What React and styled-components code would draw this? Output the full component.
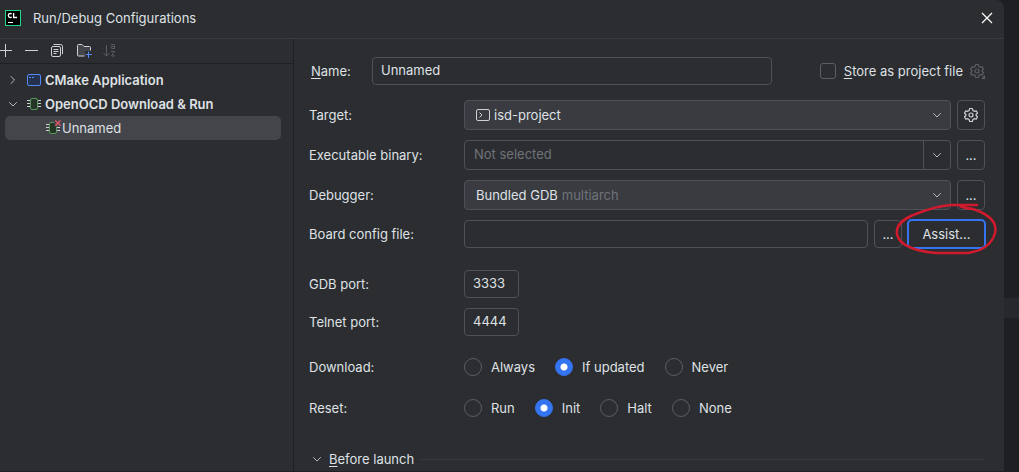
import React, { useState } from "react";
import styled, { createGlobalStyle, css } from "styled-components";

const GlobalStyle = createGlobalStyle`
  *, *::before, *::after { box-sizing: border-box; }
  html, body, #root { height: 100%; }
  body {
    margin: 0;
    background: #1e1f22;
    color: #dfe1e5;
    font: 13px/16px Inter, "Liberation Sans", sans-serif;
    overflow: hidden;
  }
  button, input, select { font: inherit; color: inherit; margin: 0; }
  svg { display: block; flex: none; }
`;

const Desktop = styled.div`
  min-height: 100%;
  display: grid;
  grid-template-columns: minmax(0, 1fr) 15px;
  border-bottom: 1px solid #231e22;
`;

const EditorEdge = styled.div`
  padding-top: 298px;
  &::before { content: ""; display: block; height: 20px; background: #26282e; }
`;

const Dialog = styled.main`
  display: flex;
  flex-direction: column;
  background: #2b2d30;
  border-top-right-radius: 8px;
`;

const TitleBar = styled.header`
  display: flex;
  align-items: center;
  gap: 12px;
  height: 39px;
  padding: 0 8px 2px 5px;
  border-bottom: 1px solid #393b40;
`;

const Title = styled.h1`
  flex: 1;
  margin: 0;
  font-size: 13px;
  font-weight: 400;
`;

const IconButton = styled.button`
  display: grid;
  place-items: center;
  padding: 0;
  border: 0;
  background: none;
`;

const Body = styled.div`
  flex: 1;
  display: grid;
  grid-template-columns: 294px minmax(0, 1fr);
`;

const Sidebar = styled.aside`
  border-right: 1px solid #1e1f22;
`;

const Toolbar = styled.div`
  display: flex;
  align-items: center;
  gap: 10px;
  height: 25px;
  border-bottom: 1px solid #1e1f22;
  padding-bottom: 2px;
  overflow: hidden;
`;

const Tree = styled.ul`
  list-style: none;
  margin: 0;
  padding: 4px 12px 0 5px;
`;

const TreeItem = styled.li`
  display: flex;
  align-items: center;
  height: 24px;
  gap: ${(p) => (p.$child ? 1 : 3)}px;
  padding-left: ${(p) => (p.$child ? 40 : 0)}px;
  border-radius: 5px;
  font-weight: ${(p) => (p.$child ? 400 : 600)};
  background: ${(p) => (p.$selected ? "#43454a" : "transparent")};
`;

const Twisty = styled(IconButton)`
  width: 16px;
  margin-right: 2px;
`;

const Form = styled.form`
  padding: 18px 19px 0 15px;
`;

const NameRow = styled.div`
  display: flex;
  align-items: center;
  padding-left: 2px;
  margin-bottom: 15px;
`;

const NameLabel = styled.label`
  width: 61px;
`;

const Mnemonic = styled.span`
  text-decoration: underline;
  text-underline-offset: 2px;
`;

const StoreOption = styled.div`
  display: flex;
  align-items: center;
  gap: 8px;
  margin-left: auto;
  padding-left: 16px;
  white-space: nowrap;
`;

const StoreLabel = styled.label`
  margin-right: -2px;
`;

const CheckBox = styled.input`
  appearance: none;
  width: 16px;
  height: 16px;
  border: 1px solid #5a5d63;
  border-radius: 3px;
`;

const box = css`
  border: 1px solid #4e5157;
  border-radius: 4px;
  background: #2b2d30;
`;

const TextBox = styled.input`
  ${box}
  height: 28px;
  padding: 0 8px 2px;
  min-width: 0;
  outline: 0;
  width: ${(p) => (p.$size ? p.$size + "px" : "auto")};
  flex: ${(p) => (p.$grow ? "1 1 0" : "none")};
`;

const NameBox = styled(TextBox)`
  flex: 0 1 400px;
`;

const Row = styled.div`
  display: grid;
  grid-template-columns: 155px minmax(0, 1fr);
  align-items: center;
  margin-bottom: ${(p) => p.$after ?? 10}px;
`;

const RowName = styled.label`
  white-space: nowrap;
`;

const Controls = styled.div`
  display: flex;
  align-items: center;
  gap: 6px;
`;

const Combo = styled.div`
  ${box}
  flex: 1;
  display: flex;
  align-items: center;
  height: 30px;
  padding: 0 5px 0 11px;
  background: ${(p) => (p.$editable ? "#2b2d30" : "#393b40")};
`;

const Select = styled.select`
  appearance: none;
  border: 0;
  padding: 0;
  background: transparent;
  outline: 0;
  field-sizing: content;
  flex: ${(p) => (p.$grow ? 1 : "none")};
`;

const Hint = styled.span`
  flex: 1;
  padding-left: 4px;
  color: #6f737a;
`;

const ComboText = styled.input`
  flex: 1;
  min-width: 0;
  height: 28px;
  padding: 0 0 2px;
  margin-left: -2px;
  border: 0;
  outline: 0;
  background: none;
  &::placeholder { color: #6f737a; }
`;

const ComboArrow = styled(IconButton)`
  height: 28px;
  padding-left: 5px;
  border-left: 1px solid #4e5157;
`;

const Button = styled.button`
  ${box}
  display: grid;
  place-items: center;
  width: 28px;
  height: ${(p) => p.$height ?? 30}px;
  padding: 0;
`;

const AssistWrap = styled.div`
  position: relative;
  margin: -1px -1px -1px -1px;
`;

const AssistButton = styled(Button)`
  width: 79px;
  border: 2px solid #3574f0;
  border-radius: 5px;
`;

const Marker = styled.svg`
  position: absolute;
  left: -13px;
  top: -19px;
  pointer-events: none;
`;

const RadioGroup = styled.div`
  display: flex;
  gap: 20px;
`;

const RadioLabel = styled.label`
  display: flex;
  align-items: center;
  gap: 9px;
`;

const Radio = styled.input`
  appearance: none;
  width: 18px;
  height: 18px;
  border-radius: 50%;
  border: 1px solid #5a5d63;
  &:checked {
    border-color: #3574f0;
    background: radial-gradient(circle, #fff 3px, #3574f0 4px);
  }
`;

const SectionHeader = styled.div`
  display: flex;
  align-items: center;
  gap: 7px;
  &::after { content: ""; flex: 1; height: 1px; background: #393b40; }
`;

const SectionToggle = styled.button`
  display: flex;
  align-items: center;
  gap: 4px;
  padding: 0;
  border: 0;
  background: none;
`;

function Chevron({ right }) {
  return (
    <svg width="16" height="16" viewBox="0 0 16 16" fill="none" stroke="#b4b8bf" strokeLinecap="round" strokeLinejoin="round">
      <path d={right ? "M6 4.5 L9.5 8 L6 11.5" : "M4.5 6.5 L8 10 L11.5 6.5"} />
    </svg>
  );
}

function Gear({ color, corner }) {
  return (
    <svg width="16" height="16" viewBox="0 0 16 16" fill="none" stroke={color}>
      <path
        strokeLinejoin="round"
        strokeWidth="1.2"
        d="M6.700 1.500h2.600l.6 2 1.300.8 2-.5 1.300 2.200-1.400 1.500v1l1.400 1.500-1.300 2.200-2-.5-1.300.8-.6 2H6.700l-.6-2-1.300-.8-2 .5L1.500 10l1.400-1.500v-1L1.500 6l1.300-2.200 2 .5 1.300-.8z"
      />
      <circle cx="8" cy="8" r="2" strokeWidth="1.200" />
      {corner && <path d="M16 12v4h-4z" fill={color} stroke="none" />}
    </svg>
  );
}

function Chip({ failed }) {
  return (
    <svg width="16" height="16" viewBox="0 0 16 16" fill="none">
      <path d="M1 4.500h3M1 7.500h3M1 10.500h3M12 4.500h3M12 7.500h3M12 10.500h3" stroke="#ced0d6" />
      <rect x="4.500" y="2.500" width="7" height="11" rx="1.500" fill="#253627" stroke="#57965c" />
      {failed && (
        <>
          <path d="M9 0h7v6.500h-5l-2-2z" fill="#43454a" />
          <path d="M10.300 .5l5.200 5.200M15.500 .5l-5.200 5.200" stroke="#e55765" strokeWidth="1.300" />
        </>
      )}
    </svg>
  );
}

function RadioRow({ title, name, options, initial, after }) {
  const [value, setValue] = useState(initial);
  return (
    <Row $after={after} role="radiogroup" aria-label={title}>
      <RowName as="span">{title}</RowName>
      <RadioGroup>
        {options.map((o) => (
          <RadioLabel key={o}>
            <Radio type="radio" name={name} checked={value === o} onChange={() => setValue(o)} />
            {o}
          </RadioLabel>
        ))}
      </RadioGroup>
    </Row>
  );
}

export default function App() {
  return (
    <>
      <GlobalStyle />
      <Desktop>
        <Dialog>
          <TitleBar>
            <svg width="16" height="16" viewBox="0 0 16 16">
              <rect width="16" height="16" fill="#21d789" />
              <rect x="1" y="1" width="14" height="14" fill="#000" />
              <path d="M6.700 4Q5.900 3.400 5 3.500Q3.300 3.700 3.300 5.500T5 7.500Q5.900 7.600 6.700 7M8.600 3v4.500H12" fill="none" stroke="#fff" strokeWidth="1.300" />
              <path d="M3 12.500h5" stroke="#fff" />
            </svg>
            <Title>Run/Debug Configurations</Title>
            <IconButton aria-label="Close">
              <svg width="18" height="16" viewBox="0 0 18 16" stroke="#fff" strokeWidth="1.200">
                <path d="M4 3l10 10M14 3l-10 10" />
              </svg>
            </IconButton>
          </TitleBar>
          <Body>
            <Sidebar>
              <Toolbar>
                <IconButton aria-label="Add">
                  <svg width="13" height="16" viewBox="3 0 13 16" stroke="#ced0d6"><path d="M2 8.500h13M8.500 2v13" /></svg>
                </IconButton>
                <IconButton aria-label="Remove">
                  <svg width="16" height="16" viewBox="0 0 16 16" stroke="#ced0d6"><path d="M2 8.500h13" /></svg>
                </IconButton>
                <IconButton aria-label="Copy">
                  <svg width="16" height="16" viewBox="0 0 16 16" fill="none" stroke="#ced0d6">
                    <rect x="1.500" y="4.500" width="9" height="10" rx="1.500" transform="translate(1 0)" />
                    <path d="M4.500 2.500h7q2 0 2 2v7.500M4.500 7.500h5M4.500 9.500h5M4.500 11.500h3" />
                  </svg>
                </IconButton>
                <IconButton aria-label="New folder">
                  <svg width="17" height="16" viewBox="0 0 17 16" fill="none">
                    <path d="M9.500 14H3.500q-1 0-1-1V3.500q0-1 1-1h3.500l2 2h5.500q1 0 1 1V8.500" fill="#43454a" stroke="#ced0d6" />
                    <path d="M10 9h7v7h-7z" fill="#2b2d30" />
                    <path d="M13.500 9.500v6.500M10.500 12.500h6.500" stroke="#548af7" />
                  </svg>
                </IconButton>
                <IconButton aria-label="Sort alphabetically" disabled>
                  <svg width="16" height="16" viewBox="0 0 16 16" fill="none" stroke="#5a5d63">
                    <path d="M4.500 3v11M1.500 11l3 3 3-3M9 2.500h2.500q1 0 1 1v3.500M12.500 6.500h-2.500q-1 0-1-1t1-1h2.500M9 9.500h3.500l-3 4.500h3.500" />
                  </svg>
                </IconButton>
              </Toolbar>
              <Tree>
                <TreeItem>
                  <Twisty aria-label="Expand"><Chevron right /></Twisty>
                  <svg width="16" height="16" viewBox="0 0 16 16" fill="none">
                    <rect x="1.500" y="2.500" width="13" height="11" rx="1.500" fill="#25324d" stroke="#548af7" />
                    <path d="M3 5.500h2M6 5.500h2" stroke="#548af7" />
                  </svg>
                  CMake Application
                </TreeItem>
                <TreeItem>
                  <Twisty aria-label="Collapse"><Chevron /></Twisty>
                  <Chip />
                  OpenOCD Download &amp; Run
                </TreeItem>
                <TreeItem $child $selected>
                  <Chip failed />
                  Unnamed
                </TreeItem>
              </Tree>
            </Sidebar>
            <Form onSubmit={(e) => e.preventDefault()}>
              <NameRow>
                <NameLabel htmlFor="name"><Mnemonic>N</Mnemonic>ame:</NameLabel>
                <NameBox id="name" defaultValue="Unnamed" />
                <StoreOption>
                  <CheckBox type="checkbox" id="store" />
                  <StoreLabel htmlFor="store"><Mnemonic>S</Mnemonic>tore as project file</StoreLabel>
                  <Gear color="#5a5d63" corner />
                </StoreOption>
              </NameRow>
              <Row>
                <RowName htmlFor="target">Target:</RowName>
                <Controls>
                  <Combo>
                    <svg width="18" height="16" viewBox="0 0 18 16" fill="none" stroke="#ced0d6">
                      <rect x=".5" y="2.500" width="13" height="11" rx="1.500" />
                      <path d="M3.500 5.500L6 8l-2.500 2.500" />
                    </svg>
                    <Select id="target" $grow><option>isd-project</option></Select>
                    <Chevron />
                  </Combo>
                  <Button type="button" aria-label="Target settings"><Gear color="#ced0d6" /></Button>
                </Controls>
              </Row>
              <Row>
                <RowName htmlFor="binary">Executable binary:</RowName>
                <Controls>
                  <Combo $editable>
                    <ComboText id="binary" placeholder="Not selected" />
                    <ComboArrow type="button" aria-label="Show binaries"><Chevron /></ComboArrow>
                  </Combo>
                  <Button type="button">...</Button>
                </Controls>
              </Row>
              <Row>
                <RowName htmlFor="debugger">Debugger:</RowName>
                <Controls>
                  <Combo>
                    <Select id="debugger"><option>Bundled GDB</option></Select>
                    <Hint>multiarch</Hint>
                    <Chevron />
                  </Combo>
                  <Button type="button">...</Button>
                </Controls>
              </Row>
              <Row $after={22}>
                <RowName htmlFor="board">Board config file:</RowName>
                <Controls>
                  <TextBox id="board" $grow />
                  <Button type="button" $height={28}>...</Button>
                  <AssistWrap>
                    <AssistButton type="button">Assist...</AssistButton>
                    <Marker width="104" height="56" viewBox="0 0 104 56" fill="none" stroke="#d11a2d" strokeWidth="2.500" strokeLinecap="round">
                      <path d="M83 5H57C40 6 27 12 17 16C6 21 2 27 3 34C5 46 22 51 42 53H74C88 51 98 44 101 33C104 20 91 13 79 9Q68 8 65 5" />
                    </Marker>
                  </AssistWrap>
                </Controls>
              </Row>
              <Row>
                <RowName htmlFor="gdb">GDB port:</RowName>
                <TextBox id="gdb" $size={55} defaultValue="3333" />
              </Row>
              <Row $after={22}>
                <RowName htmlFor="telnet">Telnet port:</RowName>
                <TextBox id="telnet" $size={55} defaultValue="4444" />
              </Row>
              <RadioRow title="Download:" name="download" options={["Always", "If updated", "Never"]} initial="If updated" after={23} />
              <RadioRow title="Reset:" name="reset" options={["Run", "Init", "Halt", "None"]} initial="Init" after={34} />
              <SectionHeader>
                <SectionToggle type="button">
                  <Chevron />
                  <span><Mnemonic>B</Mnemonic>efore launch</span>
                </SectionToggle>
              </SectionHeader>
            </Form>
          </Body>
        </Dialog>
        <EditorEdge />
      </Desktop>
    </>
  );
}
